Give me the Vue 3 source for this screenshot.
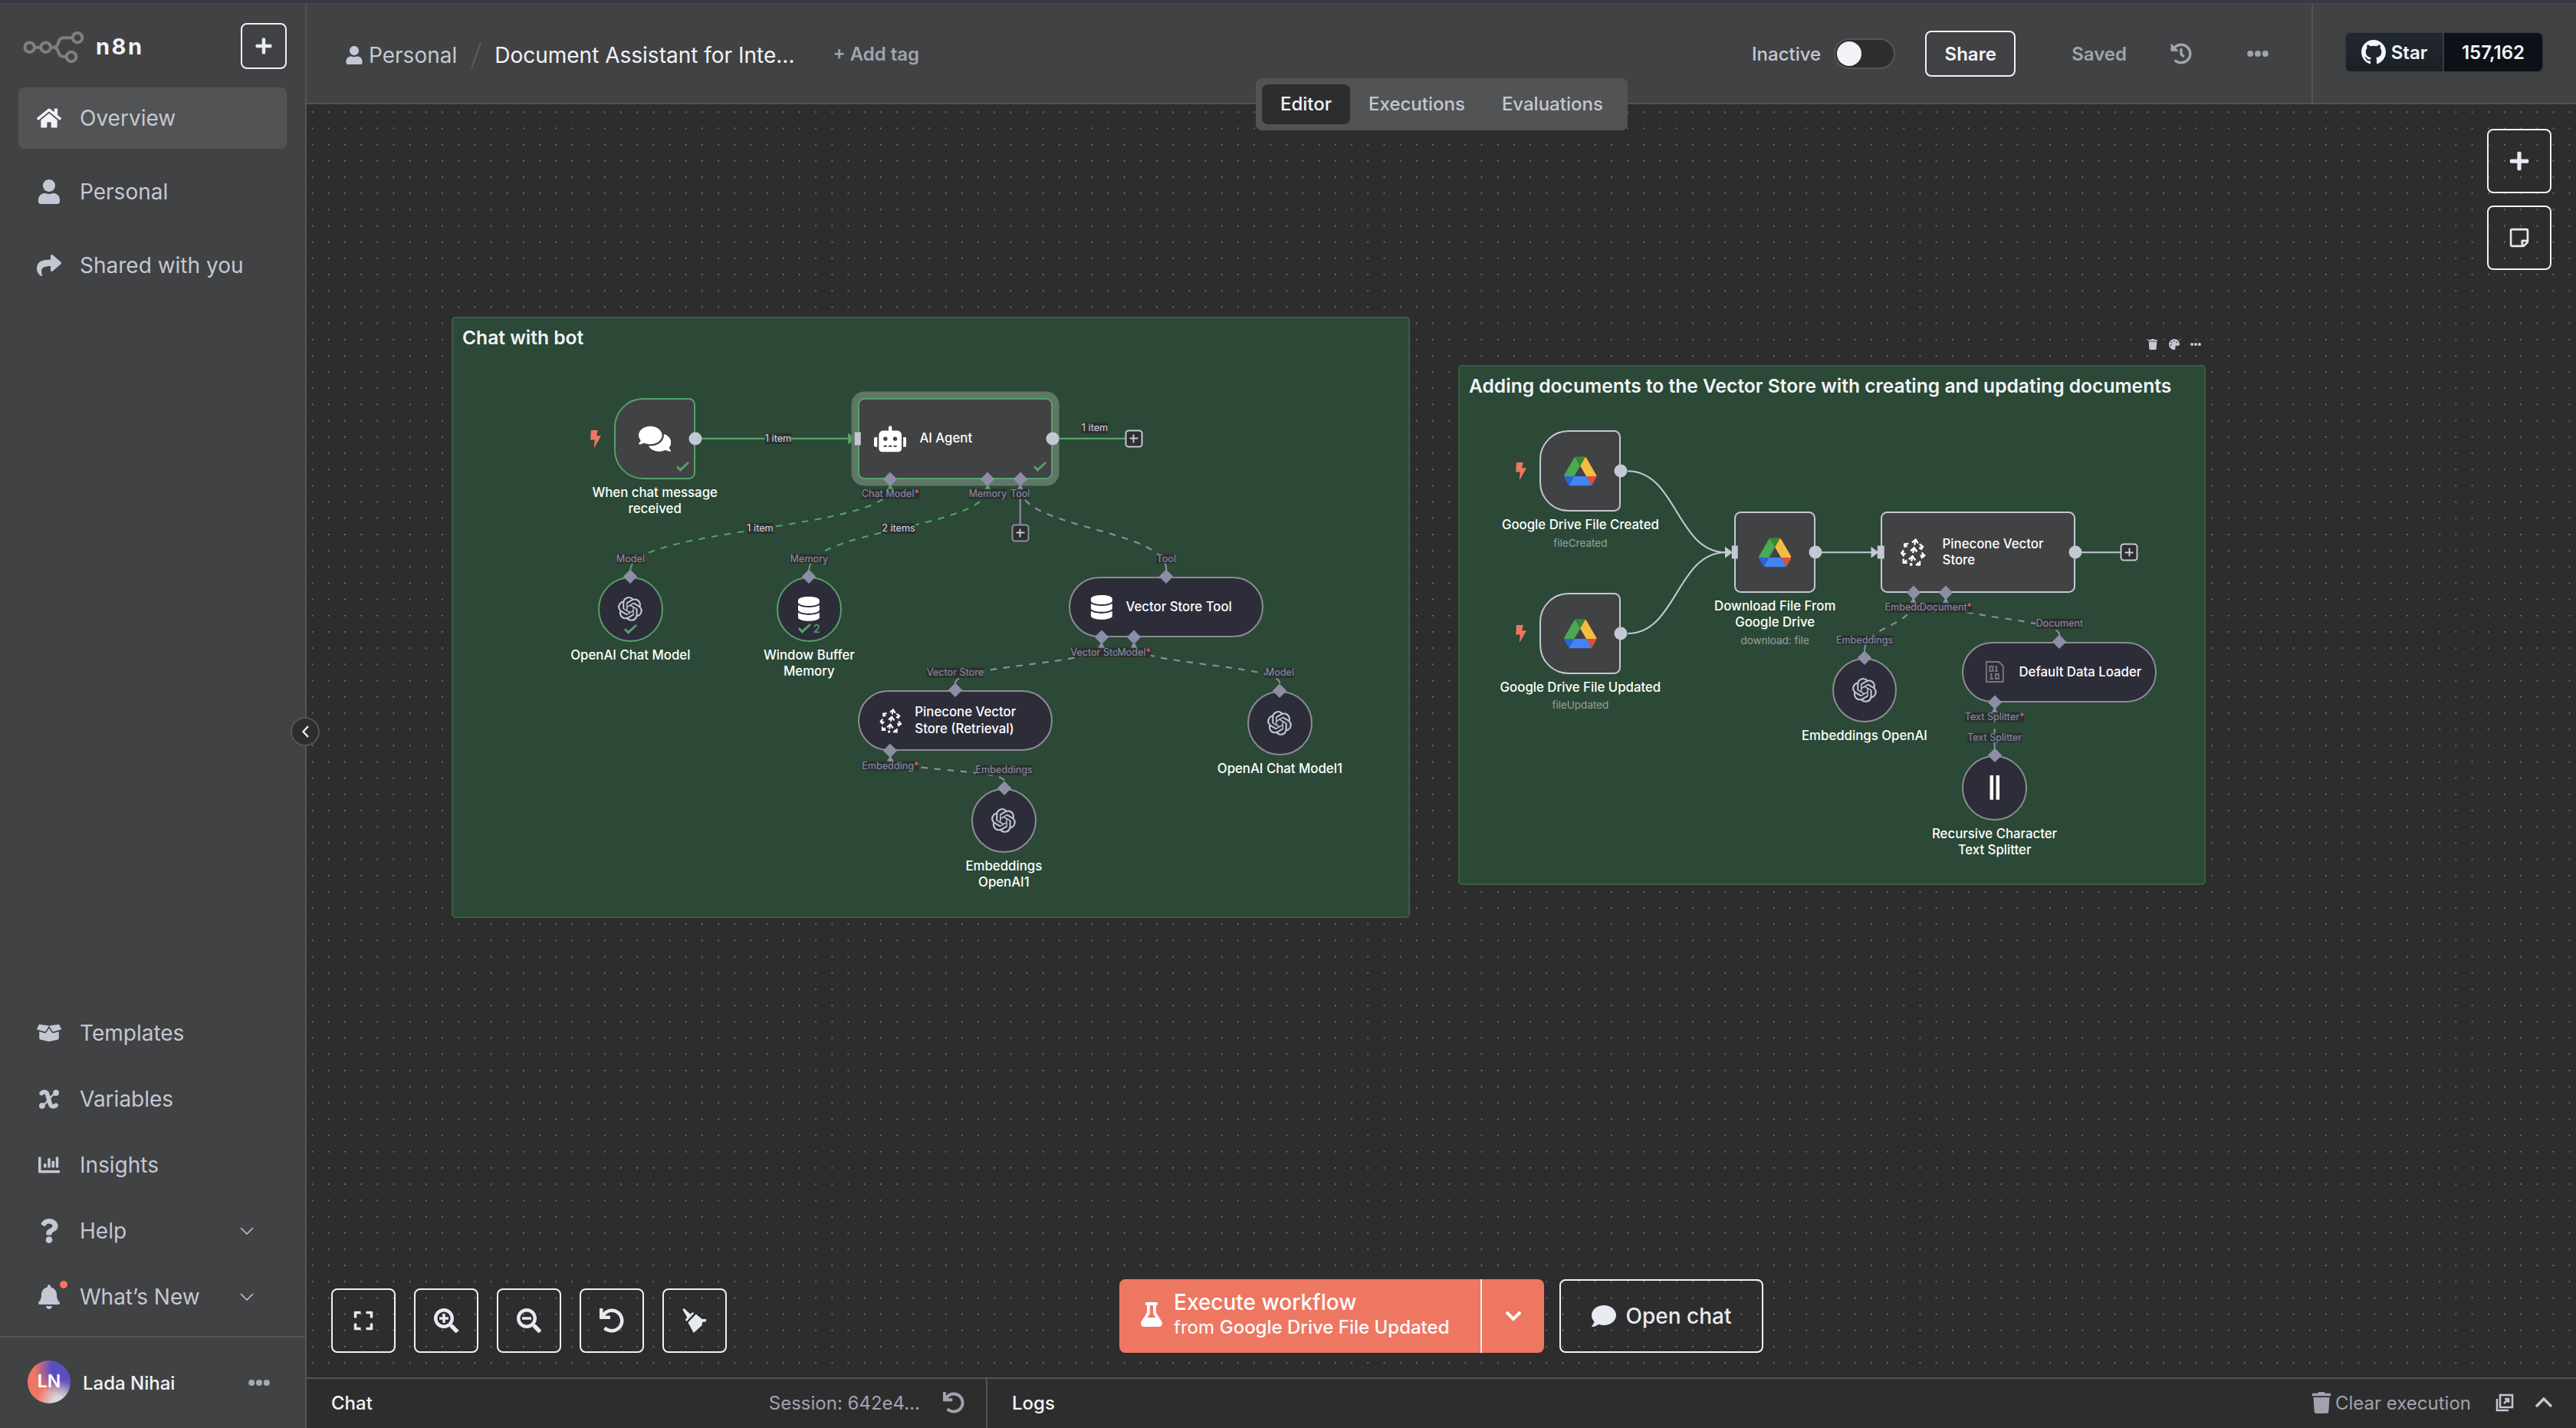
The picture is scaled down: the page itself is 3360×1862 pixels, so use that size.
<template>
  <div class="app">
    <div class="top-strip"></div>
    <div class="layout">
      <aside class="sidebar">
        <div class="brand">
          <svg class="brand-logo" viewBox="0 0 80 42" fill="none">
            <circle cx="8.7" cy="20.7" r="6.3" />
            <circle cx="29.7" cy="20.7" r="6.3" />
            <circle cx="71" cy="8.2" r="6.3" />
            <circle cx="63" cy="33" r="6.3" />
            <path d="M15 20.7h8M36 20.7h4c8 0 4-12.5 13-12.5h12M40 20.7c8 0 4 12.3 13 12.3h4" />
          </svg>
          <span class="brand-name">n8n</span>
          <button class="square-btn add-btn"><Icon name="plus" class="i24" /></button>
        </div>

        <nav class="nav">
          <a
            v-for="item in mainMenu"
            :key="item.label"
            class="nav-item"
            :class="{ active: item.active }"
          >
            <span class="nav-icon"><Icon :name="item.icon" class="i32" /></span>
            <span>{{ item.label }}</span>
          </a>
        </nav>

        <nav class="nav-bottom">
          <a v-for="item in bottomMenu" :key="item.label" class="nav-item">
            <span class="nav-icon">
              <svg v-if="item.icon === 'variable'" class="icon-x" viewBox="0 0 26 25" fill="none">
                <path d="M3.2 4.6C5.4 2 9.4 2 10.6 5.5l3.9 13.4c1.200 3.400 5 3.800 7.600 1.300" stroke-width="5.6" />
                <path d="M4 20.8C10 19 15 6.5 22 4.2" stroke-width="2.4" />
                <circle cx="3.9" cy="20.8" r="3.9" />
                <circle cx="22" cy="4" r="3.9" />
              </svg>
              <Icon v-else :name="item.icon" :class="item.small ? 'i28' : 'i32'" />
              <span v-if="item.dot" class="nav-dot"></span>
            </span>
            <span>{{ item.label }}</span>
            <svg v-if="item.expandable" class="nav-chevron" viewBox="0 0 18 10" fill="none">
              <path d="M1 1l8 8 8-8" />
            </svg>
          </a>
        </nav>

        <div class="user">
          <div class="avatar">LN</div>
          <span class="user-name">Lada Nihai</span>
          <Icon name="dots" class="user-dots" />
        </div>
      </aside>

      <main class="main">
        <header class="header">
          <div class="crumbs">
            <Icon name="user" class="i24" />
            <span class="crumb-home">Personal</span>
            <svg class="crumb-slash" viewBox="0 0 14 36"><path d="M1 35L13 1" /></svg>
            <span class="crumb-title">Document Assistant for Inte...</span>
            <span class="add-tag">+ Add tag</span>
          </div>
          <div class="actions">
            <span class="status">Inactive</span>
            <span class="toggle"><i></i></span>
            <button class="share-btn">Share</button>
            <span class="saved">Saved</span>
            <Icon name="history" class="i28 history" />
            <Icon name="dots" class="i28 more" />
          </div>
          <div class="github">
            <div class="gh-star"><Icon name="github" class="i32" />Star</div>
            <div class="gh-count">157,162</div>
          </div>
          <div class="tabs">
            <span v-for="(tab, i) in tabs" :key="tab" class="tab" :class="{ active: i === 0 }">{{ tab }}</span>
          </div>
        </header>

        <section class="canvas">
          <svg class="grid">
            <defs>
              <pattern id="dots" x="6.7" y="9.3" width="21.18" height="21.18" patternUnits="userSpaceOnUse">
                <rect width="1.7" height="1.7" rx="0.6" fill="#858587" />
              </pattern>
            </defs>
            <rect width="100%" height="100%" fill="url(#dots)" />
          </svg>

          <!-- workflow layer: every coordinate below is in window pixels -->
          <div class="viewport">
            <div
              v-for="note in stickies"
              :key="note.title"
              class="sticky"
              :style="{ left: note.x + 'px', top: note.y + 'px', width: note.w + 'px', height: note.h + 'px' }"
            >
              {{ note.title }}
            </div>
            <div class="sticky-tools">
              <Icon name="trash" />
              <Icon name="palette" />
              <Icon name="dots" />
            </div>

            <svg class="edges" viewBox="0 0 3360 1862" fill="none">
              <path
                v-for="(edge, i) in edges"
                :key="'e' + i"
                :d="edge.d"
                :class="['edge', edge.kind, { dashed: edge.dashed }]"
              />
              <path
                v-for="(arrow, i) in arrows"
                :key="'a' + i"
                :d="arrow.d"
                :class="['arrow', arrow.kind]"
              />
            </svg>

            <div
              v-for="node in nodes"
              :key="node.id"
              class="node"
              :class="[node.type, { success: node.success, selected: node.selected }]"
              :style="{ left: node.x + 'px', top: node.y + 'px' }"
            >
              <Icon v-if="node.type === 'trigger'" name="bolt" class="node-bolt" />

              <svg v-if="node.icon === 'drive'" class="node-icon" viewBox="0 0 87.3 78">
                <path v-for="p in drivePaths" :key="p.fill" :fill="p.fill" :d="p.d" />
              </svg>
              <svg v-else-if="node.icon === 'pinecone'" class="node-icon pinecone" viewBox="0 0 32 36" fill="none">
                <path v-for="(d, i) in pineconePaths" :key="i" :d="d" />
                <circle cx="13.5" cy="34" r="1.9" />
              </svg>
              <svg v-else-if="node.icon === 'binary'" class="node-icon binary" viewBox="0 0 24 28" fill="none">
                <path d="M1 1h16.5L23 6.5V27H1z" />
                <path d="M5.5 7h4v6h-4zM14 13V7h-1.5M12 13h4M7.500 23v-6H6M5.500 23h4.500M13 17h4v6h-4z" />
              </svg>
              <svg v-else-if="node.icon === 'splitter'" class="node-icon splitter" viewBox="0 0 32 32">
                <path d="M9.600 0h4.500v32H9.600zM17.700 0h4.500v32h-4.500z" />
              </svg>
              <Icon v-else :name="node.icon" class="node-icon" :class="node.icon" />

              <span v-if="node.text" class="node-text">{{ node.text }}</span>
              <span v-if="node.success" class="node-check">
                <Icon name="check" /><b v-if="node.runs">{{ node.runs }}</b>
              </span>
              <span v-if="node.label" class="node-label">
                {{ node.label }}
                <small v-if="node.sub">{{ node.sub }}</small>
              </span>
            </div>

            <i
              v-for="(item, i) in handles"
              :key="'h' + i"
              :class="['handle', item.kind]"
              :style="{ left: item.x + 'px', top: item.y + 'px' }"
            ></i>
            <span
              v-for="(t, i) in tags"
              :key="'t' + i"
              class="tag"
              :class="{ count: t.count }"
              :style="{ left: t.x + 'px', top: t.y + 'px' }"
              >{{ t.text }}<em v-if="t.required">*</em></span
            >
            <span
              v-for="(p, i) in pluses"
              :key="'p' + i"
              class="plus"
              :class="{ muted: p.muted }"
              :style="{ left: p.x + 'px', top: p.y + 'px' }"
            ></span>
          </div>

          <div class="canvas-tools">
            <button class="square-btn"><Icon name="plus" class="i28" /></button>
            <button class="square-btn"><Icon name="sticky" class="i28" /></button>
          </div>

          <div class="zoom-tools">
            <button class="square-btn"><Icon name="expand" class="i28" /></button>
            <button class="square-btn"><Icon name="zoomIn" class="i32" /></button>
            <button class="square-btn"><Icon name="zoomOut" class="i32" /></button>
            <button class="square-btn"><Icon name="undo" class="i32" /></button>
            <button class="square-btn"><Icon name="broom" class="i32" /></button>
          </div>

          <div class="run-tools">
            <div class="execute">
              <div class="execute-main">
                <Icon name="flask" class="i32" />
                <div>
                  <div class="execute-title">Execute workflow</div>
                  <div class="execute-from">from <b>Google Drive File Updated</b></div>
                </div>
              </div>
              <div class="execute-more">
                <svg viewBox="0 0 22 14" fill="none"><path d="M3 3l8 8 8-8" /></svg>
              </div>
            </div>
            <button class="chat-btn"><Icon name="comment" class="i32" />Open chat</button>
          </div>
        </section>

        <footer class="panel">
          <div class="panel-chat">
            <span class="panel-title">Chat</span>
            <span class="session">Session: 642e4...</span>
            <Icon name="undo" class="i28" />
          </div>
          <div class="panel-logs">
            <span class="panel-title">Logs</span>
            <span class="clear"><Icon name="trash" class="i28" />Clear execution</span>
            <svg class="popout" viewBox="0 0 24 24" fill="none">
              <path d="M6 2h16v16H6z" />
              <path d="M2 7v15h15M11 13l6-6M12 7h5v5" />
            </svg>
            <svg class="panel-up" viewBox="0 0 24 14" fill="none"><path d="M2 12L12 2l10 10" /></svg>
          </div>
        </footer>
      </main>

      <div class="collapse">
        <svg viewBox="0 0 9 16" fill="none"><path d="M8 1L1.5 8 8 15" /></svg>
      </div>
    </div>
  </div>
</template>

<script setup>
import { h } from 'vue'

const icons = {
  plus: ['0 0 448 512', 'M416 208H272V64c0-17.67-14.33-32-32-32h-32c-17.67 0-32 14.33-32 32v144H32c-17.67 0-32 14.33-32 32v32c0 17.67 14.33 32 32 32h144v144c0 17.67 14.33 32 32 32h32c17.67 0 32-14.33 32-32V304h144c17.67 0 32-14.33 32-32v-32c0-17.67-14.33-32-32-32z'],
  home: ['0 0 576 512', 'M280.37 148.26L96 300.11V464a16 16 0 0 0 16 16l112.06-.29a16 16 0 0 0 15.92-16V368a16 16 0 0 1 16-16h64a16 16 0 0 1 16 16v95.64a16 16 0 0 0 16 16.05L464 480a16 16 0 0 0 16-16V300L295.67 148.26a12.19 12.19 0 0 0-15.3 0zM571.6 251.47L488 182.56V44.05a12 12 0 0 0-12-12h-56a12 12 0 0 0-12 12v72.61L318.47 43a48 48 0 0 0-61 0L4.34 251.47a12 12 0 0 0-1.6 16.9l25.5 31A12 12 0 0 0 45.15 301l235.22-193.74a12.19 12.19 0 0 1 15.3 0L530.9 301a12 12 0 0 0 16.9-1.6l25.5-31a12 12 0 0 0-1.7-16.93z'],
  user: ['0 0 448 512', 'M224 256c70.7 0 128-57.3 128-128S294.7 0 224 0 96 57.3 96 128s57.3 128 128 128zm89.6 32h-16.7c-22.2 10.2-46.9 16-72.9 16s-50.6-5.8-72.9-16h-16.7C60.2 288 0 348.2 0 422.4V464c0 26.5 21.5 48 48 48h352c26.5 0 48-21.5 48-48v-41.6c0-74.2-60.2-134.4-134.4-134.4z'],
  share: ['0 0 512 512', 'M503.691 189.836L327.687 37.851C312.281 24.546 288 35.347 288 56.015v80.053C127.371 137.907 0 170.1 0 322.326c0 61.441 39.581 122.309 83.333 154.132 13.653 9.931 33.111-2.533 28.077-18.631C66.066 312.814 132.917 274.316 288 272.085V360c0 20.7 24.3 31.453 39.687 18.164l176.004-152c11.071-9.562 11.086-26.753 0-36.328z'],
  box: ['0 0 640 512', 'M425.7 256c-16.9 0-32.8-9-41.4-23.4L320 126l-64.2 106.6c-8.7 14.5-24.6 23.5-41.5 23.5-4.5 0-9-.6-13.3-1.9L64 215v178c0 14.7 10 27.5 24.2 31l216.2 54.1c10.2 2.5 20.9 2.5 31 0L551.8 424c14.2-3.6 24.2-16.4 24.2-31V215l-137 39.1c-4.3 1.3-8.8 1.9-13.3 1.9zm212.6-112.2L586.8 41c-3.1-6.2-9.8-9.8-16.7-8.9L320 64l91.7 152.1c3.8 6.3 11.4 9.3 18.5 7.3l197.9-56.5c9.9-2.9 14.7-13.9 10.2-23.1zM53.2 41L1.7 143.8c-4.6 9.2.3 20.2 10.1 23l197.9 56.5c7.1 2 14.7-1 18.5-7.3L320 64 69.8 32.1c-6.9-.8-13.5 2.7-16.6 8.9z'],
  chart: ['0 0 512 512', 'M332.8 320h38.4c6.4 0 12.8-6.4 12.8-12.8V172.8c0-6.4-6.4-12.8-12.8-12.8h-38.4c-6.4 0-12.8 6.4-12.8 12.8v134.4c0 6.4 6.4 12.8 12.8 12.8zm96 0h38.4c6.4 0 12.8-6.4 12.8-12.8V76.8c0-6.4-6.4-12.8-12.8-12.8h-38.4c-6.4 0-12.8 6.4-12.8 12.8v230.4c0 6.4 6.4 12.8 12.8 12.8zm-288 0h38.4c6.4 0 12.8-6.4 12.8-12.8v-70.4c0-6.4-6.4-12.8-12.8-12.8h-38.4c-6.4 0-12.8 6.4-12.8 12.8v70.4c0 6.4 6.4 12.8 12.8 12.8zm96 0h38.4c6.4 0 12.8-6.4 12.8-12.8V108.8c0-6.4-6.4-12.8-12.8-12.8h-38.4c-6.4 0-12.8 6.4-12.8 12.8v198.4c0 6.4 6.4 12.8 12.8 12.8zM496 384H64V80c0-8.84-7.16-16-16-16H16C7.16 64 0 71.16 0 80v336c0 17.67 14.33 32 32 32h464c8.84 0 16-7.16 16-16v-32c0-8.84-7.16-16-16-16z'],
  question: ['0 0 384 512', 'M202.021 0C122.202 0 70.503 32.703 29.914 91.026c-7.363 10.58-5.093 25.086 5.178 32.874l43.138 32.709c10.373 7.865 25.132 6.026 33.253-4.148 25.049-31.381 43.63-49.449 82.757-49.449 30.764 0 68.816 19.799 68.816 49.631 0 22.552-18.617 34.134-48.993 51.164-35.423 19.86-82.299 44.576-82.299 106.405V320c0 13.255 10.745 24 24 24h72.471c13.255 0 24-10.745 24-24v-5.773c0-42.86 125.268-44.645 125.268-160.627C377.504 66.256 286.902 0 202.021 0zM192 373.459c-38.196 0-69.271 31.075-69.271 69.271 0 38.195 31.075 69.27 69.271 69.27s69.271-31.075 69.271-69.271-31.075-69.27-69.271-69.27z'],
  bell: ['0 0 448 512', 'M224 512c35.32 0 63.97-28.65 63.97-64H160.03c0 35.35 28.65 64 63.97 64zm215.39-149.71c-19.32-20.76-55.47-51.99-55.47-154.29 0-77.7-54.48-139.9-127.94-155.16V32c0-17.67-14.32-32-31.98-32s-31.98 14.33-31.98 32v20.84C118.56 68.1 64.08 130.3 64.08 208c0 102.3-36.15 133.53-55.47 154.29-6 6.45-8.66 14.16-8.61 21.71.11 16.4 12.98 32 32.1 32h383.8c19.12 0 32-15.6 32.1-32 .05-7.55-2.61-15.27-8.61-21.71z'],
  dots: ['0 0 28 28', 'M4.2 10a4 4 0 1 1 0 8 4 4 0 0 1 0-8zM14 10a4 4 0 1 1 0 8 4 4 0 0 1 0-8zM23.8 10a4 4 0 1 1 0 8 4 4 0 0 1 0-8z'],
  history: ['0 0 512 512', 'M504 255.531c.253 136.64-111.18 248.372-247.82 248.468-59.015.042-113.223-20.53-155.822-54.911-11.077-8.94-11.905-25.541-1.839-35.607l11.267-11.267c8.609-8.609 22.353-9.551 31.891-1.984C173.062 425.135 212.781 440 256 440c101.705 0 184-82.311 184-184 0-101.705-82.311-184-184-184-48.814 0-93.149 18.969-126.068 49.932l50.754 50.754c10.08 10.08 2.941 27.314-11.313 27.314H24c-8.837 0-16-7.163-16-16V38.627c0-14.254 17.234-21.393 27.314-11.314l49.372 49.372C129.209 34.136 189.552 8 256 8c136.81 0 247.747 110.78 248 247.531zm-180.912 78.784l9.823-12.63c8.138-10.463 6.253-25.542-4.21-33.679L288 256.349V152c0-13.255-10.745-24-24-24h-16c-13.255 0-24 10.745-24 24v135.651l65.409 50.874c10.463 8.137 25.541 6.253 33.679-4.21z'],
  github: ['0 0 16 16', 'M8 0C3.58 0 0 3.58 0 8c0 3.54 2.29 6.53 5.47 7.59.4.07.55-.17.55-.38 0-.19-.01-.82-.01-1.49-2.01.37-2.53-.49-2.69-.94-.09-.23-.48-.94-.82-1.13-.28-.15-.68-.52-.01-.53.63-.01 1.08.58 1.23.82.72 1.21 1.87.87 2.33.66.07-.52.28-.87.51-1.07-1.78-.2-3.64-.89-3.64-3.95 0-.87.31-1.59.82-2.15-.08-.2-.36-1.02.08-2.12 0 0 .67-.21 2.2.82.64-.18 1.32-.27 2-.27s1.36.09 2 .27c1.53-1.04 2.2-.82 2.2-.82.44 1.1.16 1.92.08 2.12.51.56.82 1.27.82 2.15 0 3.07-1.87 3.75-3.65 3.95.29.25.54.73.54 1.48 0 1.07-.01 1.93-.01 2.2 0 .21.15.46.55.38A8.01 8.01 0 0016 8c0-4.42-3.58-8-8-8z'],
  sticky: ['0 0 448 512', 'M448 348.106V80c0-26.51-21.49-48-48-48H48C21.49 32 0 53.49 0 80v351.988c0 26.51 21.49 48 48 48h268.118a48 48 0 0 0 33.941-14.059l83.882-83.882A48 48 0 0 0 448 348.106zm-128 80.005v-76.118h76.118L320 428.111zM400 80v223.988H296c-13.255 0-24 10.745-24 24v104H48V80h352z'],
  expand: ['0 0 448 512', 'M0 180V56c0-13.3 10.7-24 24-24h124c6.6 0 12 5.4 12 12v40c0 6.6-5.4 12-12 12H64v84c0 6.6-5.4 12-12 12H12c-6.6 0-12-5.4-12-12zM288 44v40c0 6.6 5.4 12 12 12h84v84c0 6.6 5.4 12 12 12h40c6.6 0 12-5.4 12-12V56c0-13.3-10.7-24-24-24H300c-6.6 0-12 5.4-12 12zm148 276h-40c-6.6 0-12 5.4-12 12v84h-84c-6.6 0-12 5.4-12 12v40c0 6.6 5.4 12 12 12h124c13.3 0 24-10.7 24-24V332c0-6.6-5.4-12-12-12zM160 468v-40c0-6.6-5.4-12-12-12H64v-84c0-6.6-5.4-12-12-12H12c-6.6 0-12 5.4-12 12v124c0 13.3 10.7 24 24 24h124c6.6 0 12-5.4 12-12z'],
  zoomIn: ['0 0 512 512', 'M304 192v32c0 6.6-5.4 12-12 12h-56v56c0 6.6-5.4 12-12 12h-32c-6.6 0-12-5.4-12-12v-56h-56c-6.6 0-12-5.4-12-12v-32c0-6.6 5.4-12 12-12h56v-56c0-6.6 5.4-12 12-12h32c6.6 0 12 5.4 12 12v56h56c6.6 0 12 5.4 12 12zm201 284.7L476.7 505c-9.4 9.4-24.6 9.4-33.9 0L343 405.3c-4.5-4.5-7-10.6-7-17V372c-35.3 27.6-79.7 44-128 44C93.1 416 0 322.9 0 208S93.1 0 208 0s208 93.1 208 208c0 48.3-16.4 92.7-44 128h16.3c6.4 0 12.5 2.5 17 7l99.7 99.7c9.3 9.4 9.3 24.6 0 34zM344 208c0-75.2-60.8-136-136-136S72 132.8 72 208s60.8 136 136 136 136-60.8 136-136z'],
  zoomOut: ['0 0 512 512', 'M304 192v32c0 6.6-5.4 12-12 12H124c-6.6 0-12-5.4-12-12v-32c0-6.6 5.4-12 12-12h168c6.6 0 12 5.4 12 12zm201 284.7L476.7 505c-9.4 9.4-24.6 9.4-33.9 0L343 405.3c-4.5-4.5-7-10.6-7-17V372c-35.3 27.6-79.7 44-128 44C93.1 416 0 322.9 0 208S93.1 0 208 0s208 93.1 208 208c0 48.3-16.4 92.7-44 128h16.3c6.4 0 12.5 2.5 17 7l99.7 99.7c9.3 9.4 9.3 24.6 0 34zM344 208c0-75.2-60.8-136-136-136S72 132.8 72 208s60.8 136 136 136 136-60.8 136-136z'],
  undo: ['0 0 512 512', 'M212.333 224.333H12c-6.627 0-12-5.373-12-12V12C0 5.373 5.373 0 12 0h48c6.627 0 12 5.373 12 12v78.112C117.773 39.279 184.26 7.47 258.175 8.007c136.906.994 246.448 111.623 246.157 248.532C504.041 393.258 393.12 504 256.333 504c-64.089 0-122.496-24.313-166.51-64.215-5.099-4.622-5.334-12.554-.467-17.42l33.967-33.967c4.474-4.474 11.662-4.717 16.401-.525C170.76 415.336 211.58 432 256.333 432c97.268 0 176-78.716 176-176 0-97.267-78.716-176-176-176-58.496 0-110.28 28.476-142.274 72.333h98.274c6.627 0 12 5.373 12 12v48c0 6.627-5.373 12-12 12z'],
  broom: ['0 0 32 32', 'M.3 1.6L2.2 0l8.3 7.500 2.800-2.600 2 1.600L5.500 17l-1.800-2 2.600-3.200zM17.800 7.500l8 6.500h5.500l-.5 3.500-4.500.3-.8 4.500L14.800 32 7.400 18.500z'],
  flask: ['0 0 448 512', 'M437.2 403.5L320 215V64h8c13.3 0 24-10.7 24-24V24c0-13.3-10.7-24-24-24H120c-13.3 0-24 10.7-24 24v16c0 13.3 10.7 24 24 24h8v151L10.8 403.5C-18.5 450.6 15.3 512 70.9 512h306.2c55.7 0 89.4-61.5 60.1-108.5zM137.9 320l48.2-77.6c3.7-5.2 5.8-11.6 5.8-18.4V64h64v160c0 6.9 2.2 13.2 5.8 18.4l48.2 77.6h-172z'],
  comment: ['0 0 512 512', 'M256 32C114.6 32 0 125.1 0 240c0 49.6 21.4 95 57 130.7C44.5 421.1 2.7 466 2.2 466.5c-2.2 2.3-2.8 5.7-1.5 8.7S4.8 480 8 480c66.3 0 116-31.8 140.6-51.4 32.7 12.3 69 19.4 107.4 19.4 141.4 0 256-93.1 256-208S397.4 32 256 32z'],
  comments: ['0 0 576 512', 'M416 192c0-88.4-93.1-160-208-160S0 103.6 0 192c0 34.3 14.1 65.9 38 92-13.4 30.2-35.5 54.2-35.8 54.5-2.2 2.3-2.8 5.7-1.5 8.7S4.8 352 8 352c36.6 0 66.9-12.3 88.7-25 32.2 15.7 70.3 25 111.3 25 114.9 0 208-71.6 208-160zm122 220c23.9-26 38-57.7 38-92 0-66.9-53.5-124.2-129.3-148.1.9 6.6 1.3 13.3 1.3 20.1 0 105.9-107.7 192-240 192-10.8 0-21.3-.8-31.7-1.9C207.8 439.6 281.8 480 368 480c41 0 79.1-9.2 111.3-25 21.8 12.7 52.1 25 88.7 25 3.2 0 6.1-1.9 7.3-4.8 1.3-2.9.7-6.3-1.5-8.7-.3-.3-22.4-24.2-35.8-54.5z'],
  robot: ['0 0 640 512', 'M32,224H64V416H32A31.96166,31.96166,0,0,1,0,384V256A31.96166,31.96166,0,0,1,32,224Zm512-48V448a64.06328,64.06328,0,0,1-64,64H160a64.06328,64.06328,0,0,1-64-64V176a79.974,79.974,0,0,1,80-80H288V32a32,32,0,0,1,64,0V96H464A79.974,79.974,0,0,1,544,176ZM264,256a40,40,0,1,0-40,40A39.997,39.997,0,0,0,264,256Zm-8,128H192v32h64Zm96,0H288v32h64ZM456,256a40,40,0,1,0-40,40A39.997,39.997,0,0,0,456,256Zm-8,128H384v32h64ZM640,256V384a31.96166,31.96166,0,0,1-32,32H576V224h32A31.96166,31.96166,0,0,1,640,256Z'],
  database: ['0 0 448 512', 'M448 73.143v45.714C448 159.143 347.667 192 224 192S0 159.143 0 118.857V73.143C0 32.857 100.333 0 224 0s224 32.857 224 73.143zM448 176v102.857C448 319.143 347.667 352 224 352S0 319.143 0 278.857V176c48.125 33.143 136.208 48.572 224 48.572S399.874 209.143 448 176zm0 160v102.857C448 479.143 347.667 512 224 512S0 479.143 0 438.857V336c48.125 33.143 136.208 48.572 224 48.572S399.874 369.143 448 336z'],
  check: ['0 0 17 13', 'M1.9 5.2L0 7.3l5.3 5.600L17 1.900 15.200 0 5.500 8.600z'],
  trash: ['0 0 448 512', 'M432 32H312l-9.4-18.7A24 24 0 0 0 281.1 0H166.8a23.72 23.72 0 0 0-21.4 13.3L136 32H16A16 16 0 0 0 0 48v32a16 16 0 0 0 16 16h416a16 16 0 0 0 16-16V48a16 16 0 0 0-16-16zM53.2 467a48 48 0 0 0 47.9 45h245.8a48 48 0 0 0 47.9-45L416 128H32z'],
  palette: ['0 0 512 512', 'M204.3 5C104.9 24.4 24.8 104.3 5.2 203.4c-37 187 131.7 326.4 258.8 306.7 41.2-6.4 61.4-54.6 42.5-91.7-23.1-45.4 9.9-98.4 60.9-98.4h79.7c35.8 0 64.8-29.6 64.9-65.3C511.5 97.1 368.1-26.9 204.3 5zM96 320c-17.7 0-32-14.3-32-32s14.3-32 32-32 32 14.3 32 32-14.3 32-32 32zm32-128c-17.7 0-32-14.3-32-32s14.3-32 32-32 32 14.3 32 32-14.3 32-32 32zm128-64c-17.7 0-32-14.3-32-32s14.3-32 32-32 32 14.3 32 32-14.3 32-32 32zm128 64c-17.7 0-32-14.3-32-32s14.3-32 32-32 32 14.3 32 32-14.3 32-32 32z'],
  bolt: ['0 0 14 22', 'M.9 0h8.900L8 7.200h6L5.600 22H4.800l1-9.400H.2z'],
  openai: ['0 0 24 24', 'M22.2819 9.8211a5.9847 5.9847 0 0 0-.5157-4.9108 6.0462 6.0462 0 0 0-6.5098-2.9A6.0651 6.0651 0 0 0 4.9807 4.1818a5.9847 5.9847 0 0 0-3.9977 2.9 6.0462 6.0462 0 0 0 .7427 7.0966 5.98 5.98 0 0 0 .511 4.9107 6.051 6.051 0 0 0 6.5146 2.9001A5.9847 5.9847 0 0 0 13.2599 24a6.0557 6.0557 0 0 0 5.7718-4.2058 5.9894 5.9894 0 0 0 3.9977-2.9001 6.0557 6.0557 0 0 0-.7475-7.0729zm-9.022 12.6081a4.4755 4.4755 0 0 1-2.8764-1.0408l.1419-.0804 4.7783-2.7582a.7948.7948 0 0 0 .3927-.6813v-6.7369l2.02 1.1686a.071.071 0 0 1 .038.052v5.5826a4.504 4.504 0 0 1-4.4945 4.4944zm-9.6607-4.1254a4.4708 4.4708 0 0 1-.5346-3.0137l.142.0852 4.783 2.7582a.7712.7712 0 0 0 .7806 0l5.8428-3.3685v2.3324a.0804.0804 0 0 1-.0332.0615L9.74 19.9502a4.4992 4.4992 0 0 1-6.1408-1.6464zM2.3408 7.8956a4.485 4.485 0 0 1 2.3655-1.9728V11.6a.7664.7664 0 0 0 .3879.6765l5.8144 3.3543-2.0201 1.1685a.0757.0757 0 0 1-.071 0l-4.8303-2.7865A4.504 4.504 0 0 1 2.3408 7.872zm16.5963 3.8558L13.1038 8.364 15.1192 7.2a.0757.0757 0 0 1 .071 0l4.8303 2.7913a4.4944 4.4944 0 0 1-.6765 8.1042v-5.6772a.79.79 0 0 0-.407-.667zm2.0107-3.0231l-.142-.0852-4.7735-2.7818a.7759.7759 0 0 0-.7854 0L9.409 9.2297V6.8974a.0662.0662 0 0 1 .0284-.0615l4.8303-2.7866a4.4992 4.4992 0 0 1 6.6802 4.66zM8.3065 12.863l-2.02-1.1638a.0804.0804 0 0 1-.038-.0567V6.0742a4.4992 4.4992 0 0 1 7.3757-3.4537l-.142.0805L8.704 5.459a.7948.7948 0 0 0-.3927.6813zm1.0976-2.3654l2.602-1.4998 2.6069 1.4998v2.9994l-2.5974 1.4997-2.6067-1.4997Z'],
}

const Icon = (props) =>
  h('svg', { viewBox: icons[props.name][0], fill: 'currentColor' }, [h('path', { d: icons[props.name][1] })])
Icon.props = ['name']

const drivePaths = [
  { fill: '#2b64d0', d: 'm6.6 66.85 3.85 6.65c.8 1.4 1.95 2.5 3.3 3.3l13.75-23.8h-27.5c0 1.55.4 3.1 1.2 4.5z' },
  { fill: '#4ba854', d: 'm43.65 25-13.75-23.8c-1.35.8-2.5 1.9-3.3 3.3l-25.4 44a9.06 9.06 0 0 0 -1.2 4.5h27.5z' },
  { fill: '#d9503f', d: 'm73.55 76.8c1.35-.8 2.5-1.9 3.3-3.3l1.6-2.75 7.65-13.25c.8-1.4 1.2-2.95 1.2-4.5h-27.502l5.852 11.5z' },
  { fill: '#3a8636', d: 'm43.65 25 13.75-23.8c-1.35-.8-2.9-1.2-4.5-1.2h-18.5c-1.6 0-3.15.45-4.5 1.2z' },
  { fill: '#4284f3', d: 'm59.8 53h-32.3l-13.75 23.8c1.35.8 2.9 1.2 4.5 1.2h50.8c1.6 0 3.15-.45 4.5-1.2z' },
  { fill: '#f6bc42', d: 'm73.4 26.5-12.7-22c-.8-1.4-1.95-2.5-3.3-3.3l-13.75 23.8 16.15 28h27.45c0-1.55-.4-3.1-1.2-4.5z' },
]

const pineconePaths = [
  'M18 8.5l1.3-6.5M14.800 5.300L19.500 1.500l3.200 5',
  'M16 19l1.3-6.5M12.800 16.300l4.700-4 3.700 5.200',
  'M14 30l1.3-6.5M10.500 27.500l4.900-4.300 3.800 5.500',
  'M8.500 11L5 8M5 12V7.500l5-.7',
  'M24 13l4.500-2M24.500 7.500l4.300 3.300-2.500 4',
  'M6.500 20.500L1.500 19M4 15.500L1 19l3.300 4.200',
  'M25.500 22.500l5 .2M27.500 18.500l3.500 4-4.500 3.300',
  'M8 28.500L4 31.500M3.500 26.500v5.300h5',
  'M21.500 31.500l3 3M25 29.500l-.2 5-5.300-.2',
]

const mainMenu = [
  { label: 'Overview', icon: 'home', active: true },
  { label: 'Personal', icon: 'user' },
  { label: 'Shared with you', icon: 'share' },
]

const bottomMenu = [
  { label: 'Templates', icon: 'box' },
  { label: 'Variables', icon: 'variable' },
  { label: 'Insights', icon: 'chart', small: true },
  { label: 'Help', icon: 'question', expandable: true },
  { label: 'What’s New', icon: 'bell', expandable: true, dot: true },
]

const tabs = ['Editor', 'Executions', 'Evaluations']

const stickies = [
  { title: 'Chat with bot', x: 589, y: 412.5, w: 1250, h: 784 },
  { title: 'Adding documents to the Vector Store with creating and updating documents', x: 1902, y: 476, w: 975, h: 678 },
]

const nodes = [
  { id: 1, type: 'trigger', icon: 'comments', x: 801.2, y: 519, label: 'When chat message received', success: true },
  { id: 2, type: 'agent', icon: 'robot', x: 1119, y: 519, text: 'AI Agent', success: true, selected: true },
  { id: 3, type: 'round', icon: 'openai', x: 780, y: 752, label: 'OpenAI Chat Model', success: true },
  { id: 4, type: 'round', icon: 'database', x: 1013, y: 752, label: 'Window Buffer Memory', success: true, runs: 2 },
  { id: 5, type: 'pill', icon: 'database', x: 1394.2, y: 752, text: 'Vector Store Tool' },
  { id: 6, type: 'pill', icon: 'pinecone', x: 1119, y: 900, text: 'Pinecone Vector Store (Retrieval)' },
  { id: 7, type: 'round', icon: 'openai', x: 1627, y: 900.5, label: 'OpenAI Chat Model1' },
  { id: 8, type: 'round', icon: 'openai', x: 1267, y: 1027.5, label: 'Embeddings OpenAI1' },
  { id: 9, type: 'trigger', icon: 'drive', x: 2008.4, y: 561.3, label: 'Google Drive File Created', sub: 'fileCreated' },
  { id: 10, type: 'trigger', icon: 'drive', x: 2008.4, y: 773.1, label: 'Google Drive File Updated', sub: 'fileUpdated' },
  { id: 11, type: 'box', icon: 'drive', x: 2262.2, y: 667.2, label: 'Download File From Google Drive', sub: 'download: file' },
  { id: 12, type: 'agent', icon: 'pinecone', x: 2453.2, y: 667.2, text: 'Pinecone Vector Store' },
  { id: 13, type: 'round', icon: 'openai', x: 2389.6, y: 857.8, label: 'Embeddings OpenAI' },
  { id: 14, type: 'pill', icon: 'binary', x: 2559.2, y: 836.6, text: 'Default Data Loader' },
  { id: 15, type: 'round', icon: 'splitter', x: 2559.2, y: 985, label: 'Recursive Character Text Splitter' },
]

// sub-node connection, runs from the child's top up to the parent's bottom
const curve = (x1, y1, x2, y2) => {
  const my = (y1 + y2) / 2
  return `M${x1} ${y1}C${x1} ${my} ${x2} ${my} ${x2} ${y2}`
}

const edges = [
  { d: 'M915 571.9H1108', kind: 'ok' },
  { d: 'M1381 571.9H1468', kind: 'ok' },
  { d: curve(822.4, 743, 1161.3, 636), kind: 'ok', dashed: true },
  { d: curve(1055.4, 743, 1288.3, 636), kind: 'ok', dashed: true },
  { d: curve(1521.3, 743, 1330.7, 636), kind: 'sub', dashed: true },
  { d: 'M1330.7 640V684', kind: 'sub' },
  { d: curve(1246, 891, 1436.6, 842), kind: 'sub', dashed: true },
  { d: curve(1669.4, 891, 1479, 842), kind: 'sub', dashed: true },
  { d: curve(1309.5, 1018, 1161.3, 990), kind: 'sub', dashed: true },
  { d: 'M2123 614.3C2187 614.3 2187 720.2 2251 720.2', kind: 'main' },
  { d: 'M2123 826C2187 826 2187 720.2 2251 720.2', kind: 'main' },
  { d: 'M2376 720.2H2442', kind: 'main' },
  { d: 'M2715 720.2H2766', kind: 'main' },
  { d: curve(2432, 849, 2495.5, 784), kind: 'sub', dashed: true },
  { d: curve(2686.3, 828, 2537.9, 784), kind: 'sub', dashed: true },
  { d: 'M2601.6 976V926', kind: 'sub', dashed: true },
]

const right = (x, y) => `M${x - 9} ${y - 7.5}L${x + 1} ${y}L${x - 9} ${y + 7.5}z`
const up = (x, y) => `M${x} ${y - 1}l5.2 9h-10.4z`

const arrows = [
  { d: right(1115, 571.9), kind: 'ok' },
  { d: right(2259, 720.2), kind: 'main' },
  { d: right(2449.5, 720.2), kind: 'main' },
  { d: up(1161.3, 632), kind: 'ok' },
  { d: up(1288.3, 632), kind: 'ok' },
  { d: up(1330.7, 632), kind: 'sub' },
  { d: up(1436.6, 838), kind: 'sub' },
  { d: up(1479, 838), kind: 'sub' },
  { d: up(1161.3, 986), kind: 'sub' },
  { d: up(2495.5, 780), kind: 'sub' },
  { d: up(2537.9, 780), kind: 'sub' },
  { d: up(2601.6, 923), kind: 'sub' },
]

const handles = [
  { kind: 'dot', x: 907, y: 571.9 },
  { kind: 'dot', x: 1373, y: 571.9 },
  { kind: 'dot', x: 2114.4, y: 614.3 },
  { kind: 'dot', x: 2114.4, y: 826 },
  { kind: 'dot', x: 2368.2, y: 720.2 },
  { kind: 'dot', x: 2707, y: 720.2 },
  { kind: 'bar', x: 1118.6, y: 571.9 },
  { kind: 'bar', x: 2262.5, y: 720.2 },
  { kind: 'bar', x: 2453, y: 720.2 },
  { kind: 'diamond', x: 1161.3, y: 625 },
  { kind: 'diamond', x: 1288.3, y: 625 },
  { kind: 'diamond', x: 1330.7, y: 625 },
  { kind: 'diamond', x: 822.4, y: 752 },
  { kind: 'diamond', x: 1055.4, y: 752 },
  { kind: 'diamond', x: 1521.3, y: 752 },
  { kind: 'diamond', x: 1436.6, y: 831 },
  { kind: 'diamond', x: 1479, y: 831 },
  { kind: 'diamond', x: 1246, y: 900 },
  { kind: 'diamond', x: 1161.3, y: 979.3 },
  { kind: 'diamond', x: 1669.4, y: 900.5 },
  { kind: 'diamond', x: 1309.5, y: 1027.5 },
  { kind: 'diamond', x: 2495.5, y: 773 },
  { kind: 'diamond', x: 2537.9, y: 773 },
  { kind: 'diamond', x: 2432, y: 858 },
  { kind: 'diamond', x: 2686.3, y: 836.6 },
  { kind: 'diamond', x: 2601.6, y: 915.8 },
  { kind: 'diamond', x: 2601.6, y: 985 },
]

const tags = [
  { text: '1 item', x: 1015, y: 571.9, count: true },
  { text: '1 item', x: 1428, y: 558, count: true },
  { text: '1 item', x: 991.5, y: 688.5, count: true },
  { text: '2 items', x: 1172, y: 688.5, count: true },
  { text: 'Chat Model', x: 1161.3, y: 644, required: true },
  { text: 'Memory', x: 1288.3, y: 644 },
  { text: 'Tool', x: 1330.7, y: 644 },
  { text: 'Model', x: 822.4, y: 728.6 },
  { text: 'Memory', x: 1055.4, y: 728.6 },
  { text: 'Tool', x: 1521.3, y: 728.6 },
  { text: 'Vector Store', x: 1436.6, y: 850.5, required: true },
  { text: 'Model', x: 1479, y: 850.5, required: true },
  { text: 'Vector Store', x: 1246, y: 876.8 },
  { text: 'Model', x: 1669.4, y: 876.8 },
  { text: 'Embedding', x: 1161.3, y: 998.5, required: true },
  { text: 'Embeddings', x: 1309.5, y: 1004 },
  { text: 'Embedding', x: 2495.5, y: 792.3, required: true },
  { text: 'Document', x: 2537.9, y: 792.3, required: true },
  { text: 'Embeddings', x: 2432, y: 834.5 },
  { text: 'Document', x: 2686.3, y: 813 },
  { text: 'Text Splitter', x: 2601.6, y: 935, required: true },
  { text: 'Text Splitter', x: 2601.6, y: 961.5 },
]

const pluses = [
  { x: 1478.8, y: 571.9 },
  { x: 1330.7, y: 694.7, muted: true },
  { x: 2777, y: 720.2 },
]
</script>

<style>
body {
  background: #2d2d2e;
}
</style>

<style scoped>
.app {
  display: flex;
  flex-direction: column;
  height: 1862px;
  overflow: hidden;
  font-family: Inter, 'Noto Sans', sans-serif;
  color: #f2f3f9;
}

button {
  font: inherit;
  color: inherit;
  background: none;
  padding: 0;
}

svg {
  display: block;
  flex: none;
}

.i24 {
  width: 24px;
  height: 24px;
}

.i28 {
  width: 28px;
  height: 28px;
}

.i32 {
  width: 32px;
  height: 32px;
}

.top-strip {
  flex: none;
  height: 4px;
  background: #3c3649;
  border-bottom: 2px solid #48464c;
}

.layout {
  position: relative;
  display: flex;
  flex: 1;
  min-height: 0;
}

/* sidebar */
.sidebar {
  display: flex;
  flex-direction: column;
  box-sizing: border-box;
  width: 400px;
  background: #414243;
  border-right: 2px solid #525456;
}

.brand {
  display: flex;
  align-items: center;
  padding: 24px 24px 0 30px;
}

.brand-logo {
  width: 80px;
  height: 42px;
  margin-top: 4px;
  stroke: #7e7f80;
  stroke-width: 4;
}

.brand-name {
  margin-left: 15px;
  font-size: 29px;
  font-weight: 700;
  letter-spacing: 2.5px;
}

.square-btn {
  display: flex;
  align-items: center;
  justify-content: center;
  box-sizing: border-box;
  width: 84px;
  height: 84px;
  border: 2px solid #f0f1f8;
  border-radius: 8px;
  color: #e8eaf2;
}

.add-btn {
  width: 60px;
  height: 60px;
  margin-left: auto;
}

.nav {
  display: flex;
  flex-direction: column;
  gap: 16px;
  padding: 24px 24px 0;
}

.nav-item {
  display: flex;
  align-items: center;
  gap: 24px;
  height: 80px;
  padding-left: 24px;
  border-radius: 8px;
  font-size: 28px;
  color: #c4c7d4;
}

.nav-item.active {
  background: #525355;
}

.nav-item.active .nav-icon {
  color: #f2f3f9;
}

.nav-icon {
  position: relative;
  display: flex;
  align-items: center;
  justify-content: center;
  width: 32px;
}

.icon-x {
  width: 26px;
  height: 25px;
  stroke: currentColor;
  stroke-linecap: round;
}

.icon-x circle {
  fill: currentColor;
  stroke: none;
}

.nav-bottom {
  display: flex;
  flex-direction: column;
  margin-top: auto;
  padding: 0 24px 8px;
}

.nav-bottom .nav-item {
  height: 86px;
}

.nav-dot {
  position: absolute;
  top: -5px;
  right: -8px;
  width: 10px;
  height: 10px;
  border-radius: 50%;
  background: #ee7762;
}

.nav-chevron {
  width: 18px;
  height: 10px;
  margin-left: auto;
  margin-right: 43px;
  stroke: #c4c7d4;
  stroke-width: 1.5;
}

.user {
  display: flex;
  align-items: center;
  box-sizing: border-box;
  height: 120px;
  padding: 0 46px 3px 36px;
  border-top: 2px solid #525456;
}

.avatar {
  width: 56px;
  height: 56px;
  border-radius: 50%;
  background:
    radial-gradient(circle at 72% 98%, #dcd8df 0 10%, rgba(220, 216, 223, 0) 42%),
    radial-gradient(circle at 80% 18%, #5a4fc0 0 22%, rgba(100, 82, 184, 0) 56%),
    linear-gradient(90deg, #ee7762 45%, #7a68c6 100%);
  font-size: 23px;
  font-weight: 600;
  line-height: 54px;
  text-align: center;
  color: #fff;
}

.user-name {
  margin: 3px 0 0 16px;
  font-size: 24px;
  font-weight: 500;
}

.user-dots {
  width: 28px;
  height: 28px;
  margin: 3px 0 0 auto;
  color: #a5a9b5;
}

.collapse {
  position: absolute;
  left: 379px;
  top: 929px;
  display: flex;
  align-items: center;
  justify-content: center;
  box-sizing: border-box;
  width: 38px;
  height: 38px;
  border: 2px solid #525456;
  border-radius: 50%;
  background: #2d2d2e;
}

.collapse svg {
  width: 9px;
  height: 16px;
  stroke: #e8eaf2;
  stroke-width: 2.4;
}

/* header */
.main {
  display: flex;
  flex: 1;
  flex-direction: column;
  min-width: 0;
}

.header {
  position: relative;
  z-index: 2;
  display: flex;
  flex: none;
  box-sizing: border-box;
  height: 130px;
  background: #414243;
  border-bottom: 2px solid #525456;
}

.crumbs {
  display: flex;
  align-items: center;
  padding: 3px 0 0 50px;
  color: #c4c7d4;
}

.crumb-home {
  margin-left: 7px;
  font-size: 28px;
}

.crumb-slash {
  width: 14px;
  height: 36px;
  margin: 0 17px 0 18px;
  stroke: #5c5d60;
  stroke-width: 2;
}

.crumb-title {
  font-size: 28px;
  color: #f2f3f9;
}

.add-tag {
  margin: 0 0 2px 50px;
  font-size: 24px;
  font-weight: 600;
  color: #a0a3af;
}

.actions {
  display: flex;
  align-items: center;
  margin-left: auto;
  padding-right: 56px;
  font-size: 24px;
}

.status {
  font-weight: 500;
  color: #c4c7d4;
}

.toggle {
  box-sizing: border-box;
  width: 80px;
  height: 40px;
  margin: 0 39px 0 17px;
  padding: 2px;
  border: 2px solid #525456;
  border-radius: 20px;
  background: #2d2d2e;
}

.toggle i {
  display: block;
  width: 32px;
  height: 32px;
  border-radius: 50%;
  background: #f2f3f9;
}

.share-btn {
  box-sizing: border-box;
  width: 118px;
  height: 60px;
  border: 2px solid #f0f1f8;
  border-radius: 8px;
  font-weight: 600;
}

.saved {
  margin-left: 73px;
  font-weight: 600;
  color: #a0a3af;
}

.history {
  margin-left: 57px;
  color: #a0a3af;
}

.more {
  margin-left: 72px;
  color: #a0a3af;
}

.github {
  display: flex;
  align-items: center;
  box-sizing: border-box;
  width: 345px;
  padding: 0 0 4px 41px;
  border-left: 2px solid #525456;
  font-size: 24px;
  font-weight: 600;
  color: #f0f6fc;
}

.gh-star,
.gh-count {
  display: flex;
  align-items: center;
  justify-content: center;
  box-sizing: border-box;
  height: 54px;
  border: 2px solid #373d45;
}

.gh-star {
  gap: 7px;
  width: 130px;
  border-radius: 8px 0 0 8px;
  background: linear-gradient(#222832, #1c2024);
}

.gh-count {
  width: 130px;
  border-left: 0;
  border-radius: 0 8px 8px 0;
  background: #0d1117;
}

.tabs {
  position: absolute;
  left: 1238px;
  top: 96px;
  display: flex;
  box-sizing: border-box;
  height: 68px;
  padding: 8px;
  border-radius: 8px;
  background: #525355;
}

.tab {
  padding: 0 24px;
  border-radius: 8px;
  font-size: 24px;
  font-weight: 500;
  line-height: 52px;
  color: #c4c7d4;
}

.tab.active {
  background: #2d2d2e;
  color: #f2f3f9;
}

/* canvas */
.canvas {
  position: relative;
  flex: 1;
  overflow: hidden;
  background: #2d2d2e;
}

.grid {
  position: absolute;
  inset: 0;
  width: 100%;
  height: 100%;
}

.viewport {
  position: absolute;
  left: -400px;
  top: -136px;
  width: 3360px;
  height: 1862px;
}

.sticky {
  position: absolute;
  box-sizing: border-box;
  padding: 10px 12px;
  border: 2px solid #375f45;
  border-radius: 5px;
  background: #2b4936;
  font-size: 24.6px;
  font-weight: 600;
  line-height: 30px;
  white-space: nowrap;
}

.sticky-tools {
  position: absolute;
  left: 2801px;
  top: 442px;
  display: flex;
  gap: 14px;
  color: #c4c7d4;
}

.sticky-tools svg {
  width: 14px;
  height: 14px;
}

.edges {
  position: absolute;
  inset: 0;
  width: 3360px;
  height: 1862px;
}

.edge {
  stroke-width: 2.1;
}

.edge.dashed {
  stroke-dasharray: 8.5 8.5;
}

.edge.ok {
  stroke: #54a16b;
}

.edge.sub {
  stroke: #8d8ea6;
}

.edge.main {
  stroke: #c4c7d4;
}

.arrow.ok {
  fill: #54a16b;
}

.arrow.sub {
  fill: #8d8ea6;
}

.arrow.main {
  fill: #c4c7d4;
}

.node {
  position: absolute;
  display: flex;
  align-items: center;
  box-sizing: border-box;
  border: 2px solid #c4c7d4;
  background: #414244;
  color: #fff;
}

.node.trigger,
.node.box {
  justify-content: center;
  width: 106px;
  height: 106px;
  border-radius: 8.5px;
}

.node.trigger {
  border-radius: 38px 8.5px 8.5px 38px;
}

.node.agent {
  width: 254px;
  height: 106px;
  padding-left: 19px;
  gap: 17px;
  border-radius: 8.5px;
}

.node.pill {
  width: 254px;
  height: 79.4px;
  padding-left: 24.5px;
  gap: 16px;
  border-color: #8c8c93;
  border-radius: 40px;
  background: #2d2d3a;
}

.node.round {
  justify-content: center;
  width: 84.7px;
  height: 84.7px;
  border-color: #8c8c93;
  border-radius: 50%;
  background: #2d2d3a;
}

.node.success {
  border-color: #54a16b;
}

.node.selected {
  box-shadow: 0 0 0 8.5px #5f7866;
}

.node-icon {
  width: 42.4px;
  height: 42.4px;
}

.round .node-icon,
.pill .node-icon {
  width: 31.8px;
  height: 31.8px;
}

.node-icon.openai {
  color: #c4c7d4;
}

.agent .node-icon.pinecone {
  height: 36px;
}

.node-icon.pinecone {
  stroke: #fff;
  stroke-width: 2.3;
}

.node-icon.pinecone circle {
  fill: #fff;
  stroke: none;
}

.pill .node-icon.binary {
  height: 28px;
  stroke: #77777f;
  stroke-width: 1.9;
}

.node-icon.splitter {
  fill: #fff;
}

.node-bolt {
  position: absolute;
  left: -33px;
  top: 40px;
  width: 14px;
  height: 22px;
  color: #ee7762;
}

.node-text {
  flex: none;
  width: 140px;
  font-size: 16.8px;
  font-weight: 500;
  line-height: 21.2px;
}

.pill .node-text {
  width: 165px;
}

.node-check {
  position: absolute;
  right: 6px;
  bottom: 8px;
  display: flex;
  align-items: center;
  gap: 3px;
  font-size: 15px;
  line-height: 14px;
  color: #54a16b;
}

.node-check b {
  font-weight: 500;
}

.node-check svg {
  width: 17px;
  height: 13px;
}

.round .node-check {
  right: 0;
  left: 0;
  justify-content: center;
}

.node-label {
  position: absolute;
  left: 50%;
  top: calc(100% + 9px);
  box-sizing: border-box;
  width: 212px;
  padding: 0 22px;
  transform: translateX(-50%);
  font-size: 16.8px;
  font-weight: 500;
  line-height: 21.2px;
  text-align: center;
}

.trigger .node-label {
  padding: 0;
}

.node-label small {
  display: block;
  margin-top: 4px;
  font-size: 13.5px;
  font-weight: 400;
  line-height: 17px;
  color: #9aa09f;
}

.handle {
  position: absolute;
  transform: translate(-50%, -50%);
  background: #c4c7d4;
}

.handle.dot {
  width: 17px;
  height: 17px;
  border-radius: 50%;
}

.handle.bar {
  width: 8.5px;
  height: 17px;
}

.handle.diamond {
  width: 13.4px;
  height: 13.4px;
  background: #8d8ea6;
  transform: translate(-50%, -50%) rotate(45deg);
}

.tag {
  position: absolute;
  transform: translate(-50%, -50%);
  background: rgba(45, 45, 46, 0.85);
  font-size: 12.7px;
  line-height: 12.7px;
  white-space: nowrap;
  color: #8d8ea6;
}

.tag.count {
  line-height: 14px;
  color: #d5d7e0;
}

.tag em {
  font-style: normal;
  color: #ee6a6a;
}

.plus {
  position: absolute;
  box-sizing: border-box;
  width: 23px;
  height: 23px;
  border: 2px solid #c4c7d4;
  border-radius: 4.5px;
  background:
    linear-gradient(#c4c7d4, #c4c7d4) center / 11px 2px no-repeat,
    linear-gradient(#c4c7d4, #c4c7d4) center / 2px 11px no-repeat,
    #2d2d2e;
  transform: translate(-50%, -50%);
}

.plus.muted {
  border-color: #8d8ea6;
}

/* floating controls over the canvas */
.canvas-tools {
  position: absolute;
  right: 32px;
  top: 32px;
  display: flex;
  flex-direction: column;
  gap: 16px;
}

.zoom-tools {
  position: absolute;
  left: 32px;
  bottom: 32px;
  display: flex;
  gap: 24px;
}

.run-tools {
  position: absolute;
  left: 1060px;
  bottom: 32px;
  display: flex;
  gap: 20px;
  height: 96px;
}

.execute {
  display: flex;
  width: 554px;
  border-radius: 8px;
  overflow: hidden;
  background: #ee7762;
  color: #fff;
}

.execute-main {
  display: flex;
  align-items: center;
  gap: 13px;
  box-sizing: border-box;
  width: 471px;
  padding: 0 0 5px 26px;
}

.execute-title {
  font-size: 28px;
  font-weight: 500;
  line-height: 34px;
}

.execute-from {
  font-size: 24px;
  line-height: 32px;
  white-space: nowrap;
}

.execute-from b {
  font-weight: 500;
}

.execute-more {
  display: flex;
  flex: 1;
  align-items: center;
  justify-content: center;
  border-left: 2px solid #f6f0f2;
}

.execute-more svg {
  width: 22px;
  height: 14px;
  stroke: #fff;
  stroke-width: 4;
  stroke-linecap: round;
}

.chat-btn {
  display: flex;
  align-items: center;
  justify-content: center;
  gap: 13px;
  box-sizing: border-box;
  width: 266px;
  height: 96px;
  border: 2px solid #f0f1f8;
  border-radius: 8px;
  font-size: 28px;
  font-weight: 500;
  color: #e8eaf2;
}

/* bottom panel */
.panel {
  display: flex;
  flex: none;
  box-sizing: border-box;
  height: 66px;
  border-top: 2px solid #525456;
  background: #2d2d2e;
  font-size: 24px;
  color: #a0a3af;
}

.panel-chat {
  display: flex;
  align-items: center;
  box-sizing: border-box;
  width: 888px;
  padding: 0 28px 2px 32px;
  border-right: 2px solid #525456;
}

.panel-title {
  font-weight: 500;
  color: #f2f3f9;
}

.session {
  margin: 0 30px 0 auto;
}

.panel-logs {
  display: flex;
  flex: 1;
  align-items: center;
  padding: 0 30px 2px 32px;
}

.clear {
  display: flex;
  align-items: center;
  gap: 4px;
  margin-left: auto;
}

.popout {
  width: 24px;
  height: 24px;
  margin-left: 32px;
  stroke: #c4c7d4;
  stroke-width: 2.5;
}

.panel-up {
  width: 24px;
  height: 14px;
  margin-left: 27px;
  stroke: #c4c7d4;
  stroke-width: 3.5;
}
</style>
